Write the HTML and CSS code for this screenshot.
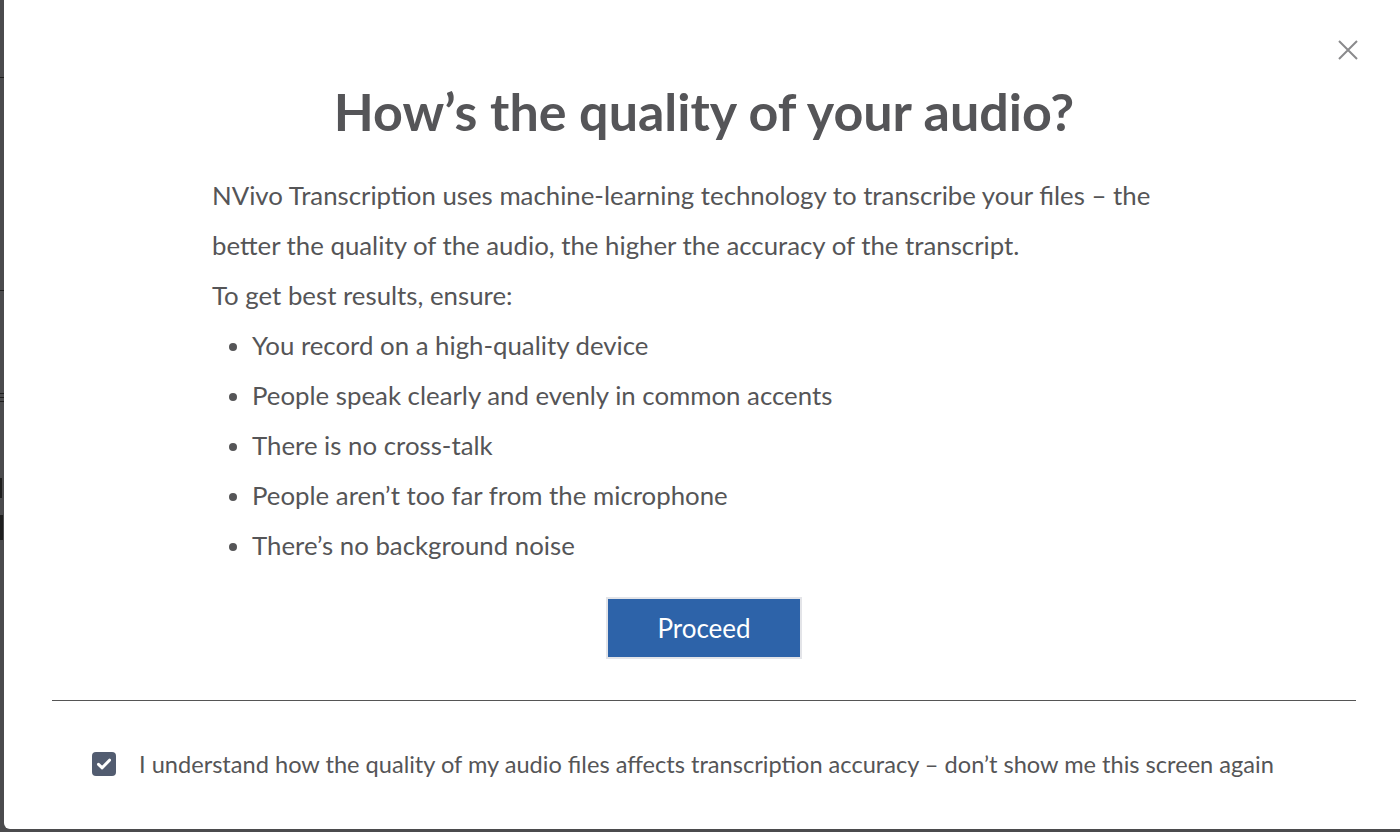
FILE: index.html
```html
<!DOCTYPE html>
<html>
<head>
  <title>Audio quality</title>
  <link rel="stylesheet" href="styles.css">
</head>
<body>
  <!-- page behind the dialog, only the left edge is visible -->
  <div class="backdrop">
    <div class="mark mark-a"></div>
    <div class="mark mark-b"></div>
    <div class="mark mark-c"></div>
    <div class="mark mark-d"></div>
    <div class="mark mark-e"></div>
  </div>

  <div class="modal">
    <button class="close" aria-label="Close">
      <svg width="20" height="20" viewBox="0 0 20 20">
        <path d="M1 1 L19 19 M19 1 L1 19" stroke="#8a8a8c" stroke-width="2" fill="none"/>
      </svg>
    </button>

    <h1>How’s the quality of your audio?</h1>

    <div class="content">
      <p>NVivo Transcription uses machine-learning technology to transcribe your files – the better the quality of the audio, the higher the accuracy of the transcript.</p>
      <p>To get best results, ensure:</p>
      <ul>
        <li>You record on a high-quality device</li>
        <li>People speak clearly and evenly in common accents</li>
        <li>There is no cross-talk</li>
        <li>People aren’t too far from the microphone</li>
        <li>There’s no background noise</li>
      </ul>
    </div>

    <div class="actions">
      <button class="proceed">Proceed</button>
    </div>

    <hr class="divider">

    <label class="dont-show">
      <span class="checkbox">
        <svg width="16" height="16" viewBox="0 0 16 16">
          <path d="M2.5 8.3 L6.2 11.8 L13.5 4.2" stroke="#fff" stroke-width="3" fill="none" stroke-linecap="round" stroke-linejoin="round"/>
        </svg>
      </span>
      I understand how the quality of my audio files affects transcription accuracy – don’t show me this screen again
    </label>
  </div>
</body>
</html>
```

FILE: styles.css
```css
/* Page */
body {
  margin: 0;
  height: 832px;
  background: #4b4b4d;
  font-family: Lato, 'Open Sans', sans-serif;
  overflow: hidden;
  position: relative;
}
.backdrop .mark {
  position: absolute;
  left: 0;
  width: 4px;
  height: 1px;
  background: #1e1e1e;
}
.mark-a { top: 77px; }
.mark-b { top: 290px; }
.mark-c { top: 393px; height: 10px !important; background: repeating-linear-gradient(#1e1e1e 0 1px, transparent 1px 4px) !important; }
.mark-d { top: 478px; height: 20px !important; width: 2px !important; }
.mark-e { top: 515px; height: 25px !important; width: 3px !important; }

/* Dialog */
.modal {
  position: relative;
  margin-left: 4px;
  width: 1400px;
  height: 829px;
  box-sizing: border-box;
  padding: 81px 48px 0;
  background: #fff;
  border-bottom-left-radius: 6px;
  color: #555557;
}
.close {
  position: absolute;
  top: 40px;
  right: 46px;
  padding: 0;
  border: none;
  background: none;
  cursor: pointer;
  line-height: 0;
}
h1 {
  margin: 0;
  font-size: 52px;
  line-height: 60px;
  font-weight: 700;
  text-align: center;
  color: #555558;
}
.content {
  width: 984px;
  margin: 29px auto 0;
  font-size: 25.8px;
  line-height: 50px;
}
.content p {
  margin: 0;
}
.content ul {
  margin: 0;
  padding-left: 40px;
}
.actions {
  margin-top: 27px;
  text-align: center;
}
.proceed {
  width: 196px;
  height: 62px;
  border: 2px solid #e3e4e8;
  background: #2d63a9;
  color: #fff;
  font-family: Lato, sans-serif;
  font-size: 26px;
  cursor: pointer;
}
.divider {
  margin: 41px 0 0;
  border: none;
  border-top: 1px solid #555;
}
.dont-show {
  display: flex;
  align-items: center;
  margin: 49px 0 0 40px;
  font-size: 23.6px;
  color: #555557;
}
.checkbox {
  display: flex;
  align-items: center;
  justify-content: center;
  width: 24px;
  height: 24px;
  margin-right: 23px;
  border-radius: 4px;
  background: #525c70;
}
```
